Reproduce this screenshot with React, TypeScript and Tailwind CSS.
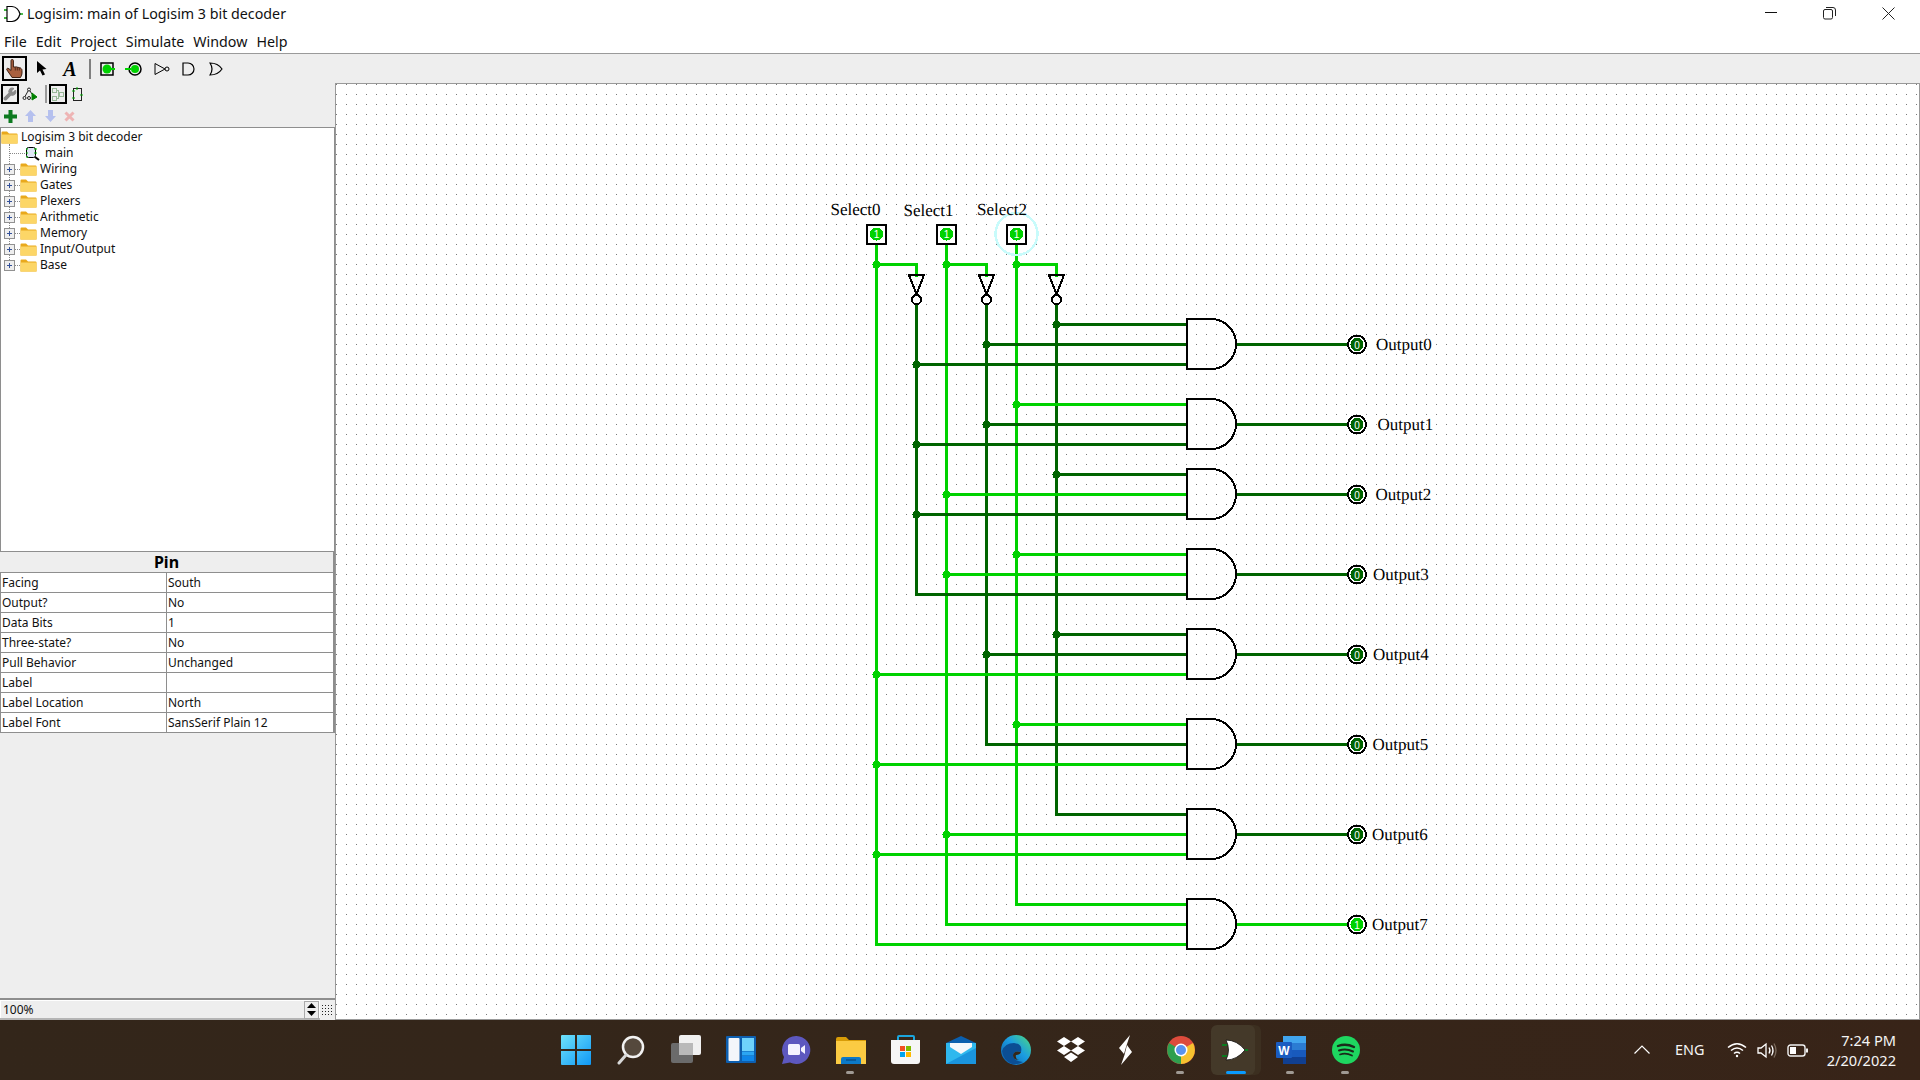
import React from "react";
import { Wrench } from "lucide-react";

const L = "#00d200";
const D = "#006400";

type Seg = [number, number, number, number, string];
const segs: Seg[] = [
  [876, 244, 876, 944, L],
  [946, 244, 946, 924, L],
  [1016, 244, 1016, 904, L],
  [916, 305, 916, 594, D],
  [986, 305, 986, 744, D],
  [1056, 305, 1056, 814, D],
  [876, 264, 916, 264, L],
  [916, 264, 916, 275, L],
  [946, 264, 986, 264, L],
  [986, 264, 986, 275, L],
  [1016, 264, 1056, 264, L],
  [1056, 264, 1056, 275, L],
];
// [column x, y, colour, junction?]
const inputs: [number, number, string, boolean][] = [
  [1056, 324, D, true], [986, 344, D, true], [916, 364, D, true],
  [1016, 404, L, true], [986, 424, D, true], [916, 444, D, true],
  [1056, 474, D, true], [946, 494, L, true], [916, 514, D, true],
  [1016, 554, L, true], [946, 574, L, true], [916, 594, D, false],
  [1056, 634, D, true], [986, 654, D, true], [876, 674, L, true],
  [1016, 724, L, true], [986, 744, D, false], [876, 764, L, true],
  [1056, 814, D, false], [946, 834, L, true], [876, 854, L, true],
  [1016, 904, L, false], [946, 924, L, false], [876, 944, L, false],
];
const outs: [number, number, number][] = [
  [344, 1376, 0], [424, 1377.5, 0], [494, 1375.5, 0], [574, 1373, 0],
  [654, 1373, 0], [744, 1372.5, 0], [834, 1372, 0], [924, 1372, 1],
];

function Circuit() {
  return (
    <svg width={1583} height={935} viewBox="336 84 1583 935" className="block" shapeRendering="crispEdges">
      <defs>
        <pattern id="dots" patternUnits="userSpaceOnUse" x="6" y="4" width="10" height="10">
          <rect x="0" y="0" width="1" height="1" fill="#7a7a7a" />
        </pattern>
      </defs>
      <rect x="336" y="84" width="1583" height="935" fill="url(#dots)" />
      {segs.map(([a, b, c, d, col], i) => (
        <line key={i} x1={a + 0.5} y1={b + 0.5} x2={c + 0.5} y2={d + 0.5} stroke={col} strokeWidth={3} strokeLinecap="square" />
      ))}
      {[876, 946, 1016].map((x) => (
        <circle key={x} cx={x + 0.5} cy={264.5} r={4} fill={L} />
      ))}
      {inputs.map(([x, y, col, j], i) => (
        <g key={i}>
          <line x1={x + 0.5} y1={y + 0.5} x2={1187} y2={y + 0.5} stroke={col} strokeWidth={3} />
          {j && <circle cx={x + 0.5} cy={y + 0.5} r={4} fill={col} />}
        </g>
      ))}
      {[916, 986, 1056].map((x) => (
        <g key={x} fill="none" stroke="#000" strokeWidth={2}>
          <path d={`M${x - 7} 275 H${x + 8} L${x + 0.5} 294 Z`} />
          <circle cx={x + 0.5} cy={299.5} r={4.5} fill="#fff" />
        </g>
      ))}
      {[876, 946, 1016].map((x) => (
        <g key={x}>
          <rect x={x - 9} y={225} width={19} height={19} fill="#fff" stroke="#000" strokeWidth={2} />
          <circle cx={x + 0.5} cy={234} r={6.5} fill={L} />
          <text x={x + 0.5} y={238} textAnchor="middle" fontSize={10} fill="#fff" fontFamily="'Liberation Sans', sans-serif">1</text>
        </g>
      ))}
      <circle cx={1016.5} cy={234} r={21} fill="none" stroke="#c8fbfb" strokeWidth={2.5} />
      {outs.map(([y, , v]) => {
        const col = v ? L : D;
        return (
          <g key={y}>
            <line x1={1236} y1={y + 0.5} x2={1348} y2={y + 0.5} stroke={col} strokeWidth={3} />
            <path d={`M1187 ${y - 25} H1211 A25 25 0 0 1 1211 ${y + 25} H1187 Z`} fill="none" stroke="#000" strokeWidth={2} />
            <circle cx={1357} cy={y + 0.5} r={9} fill="#fff" stroke="#000" strokeWidth={2} />
            <circle cx={1357} cy={y + 0.5} r={6.5} fill={col} />
            <text x={1357} y={y + 4.5} textAnchor="middle" fontSize={10} fill="#fff" fontFamily="'Liberation Sans', sans-serif">{v}</text>
          </g>
        );
      })}
      <g fontFamily="'Liberation Serif', serif" fontSize={17} fill="#000" textRendering="geometricPrecision">
        <text x={830.5} y={215}>Select0</text>
        <text x={903.5} y={216}>Select1</text>
        <text x={977} y={215}>Select2</text>
        {outs.map(([y, x], i) => (
          <text key={i} x={x} y={y + (i === 1 ? 6 : 5.5)}>{`Output${i}`}</text>
        ))}
      </g>
    </svg>
  );
}

function Folder({ className = "" }: { className?: string }) {
  return (
    <svg width={17} height={13} viewBox="0 0 17 13" className={className}>
      <path d="M0.5 1.5 Q0.5 0.5 1.5 0.5 H6 L8 2.5 H15.5 Q16.5 2.5 16.5 3.5 V12.5 H0.5 Z" fill="#e9a91c" />
      <rect x="0.5" y="3.5" width="16" height="9" fill="#fcd667" />
    </svg>
  );
}

function Expander() {
  return (
    <svg width={11} height={11} viewBox="0 0 11 11" className="shrink-0">
      <rect x="0.5" y="0.5" width="10" height="10" fill="#eeeeee" stroke="#919191" />
      <path d="M3 5.5 H8 M5.5 3 V8" stroke="#34529b" strokeWidth="1" shapeRendering="crispEdges" />
    </svg>
  );
}

const libs = ["Wiring", "Gates", "Plexers", "Arithmetic", "Memory", "Input/Output", "Base"];
const attrs: [string, string][] = [
  ["Facing", "South"],
  ["Output?", "No"],
  ["Data Bits", "1"],
  ["Three-state?", "No"],
  ["Pull Behavior", "Unchanged"],
  ["Label", ""],
  ["Label Location", "North"],
  ["Label Font", "SansSerif Plain 12"],
];

function Tree() {
  return (
    <div className="h-[425px] relative bg-white border border-[#8e8e8e] text-[12px] leading-4 text-[#111]">
      <div className="absolute left-[8px] top-[16px] h-[120px] border-l border-dotted border-[#888]" />
      <div className="flex items-center h-4 mt-[1px]">
        <Folder />
        <span className="ml-[3px]">Logisim 3 bit decoder</span>
      </div>
      <div className="flex items-center h-4 relative">
        <div className="w-[15px] ml-[9px] border-t border-dotted border-[#888]" />
        <svg width={16} height={15} viewBox="0 0 16 15">
          <rect x="1.5" y="1.5" width="9" height="10" rx="2" fill="#dfe6f5" stroke="#000" />
          <path d="M1 3h2M1 7h2M1 11h2M9 3h3M9 7h3" stroke="#00c000" />
          <path d="M10 11l4 3" stroke="#000" strokeWidth="2" />
        </svg>
        <span className="ml-[4px]">main</span>
      </div>
      {libs.map((n) => (
        <div key={n} className="flex items-center h-4 relative pl-[3px]">
          <Expander />
          <div className="w-[5px] border-t border-dotted border-[#888]" />
          <Folder />
          <span className="ml-[3px]">{n}</span>
        </div>
      ))}
    </div>
  );
}

function AttrTable() {
  return (
    <div className="w-[335px] border-r-2 border-[#8e8e8e] text-[12px] text-[#111]">
      <div className="h-5 flex items-center justify-center text-[16px] font-bold text-black">Pin</div>
      <div className="border-t border-l border-[#8e8e8e]">
        {attrs.map(([k, v]) => (
          <div key={k} className="grid grid-cols-[166px_1fr] h-5 bg-white border-b border-[#8e8e8e] leading-[19px]">
            <div className="pl-[1px] border-r border-[#8e8e8e]">{k}</div>
            <div className="pl-[1px]">{v}</div>
          </div>
        ))}
      </div>
    </div>
  );
}

function ZoomRow() {
  return (
    <div className="h-[22px] border-t-2 border-[#8e8e8e] flex text-[12px] text-[#111] bg-[#eeeeee]">
      <div className="w-[320px] h-[20px] bg-white pt-[1px] border-b-2 border-[#b5b5b5] pr-[1px]">
        <div className="h-[17px] ml-[1px] bg-[#eeeeee] flex items-center justify-between pl-[2px]">
          <span>100%</span>
          <div className="w-[15px] h-[18px] border border-[#aaa] flex flex-col items-center justify-around">
            <svg width={9} height={5} viewBox="0 0 9 5"><path d="M0 5 L4.5 0 L9 5 Z" fill="#000" /></svg>
            <svg width={9} height={5} viewBox="0 0 9 5"><path d="M0 0 L4.5 5 L9 0 Z" fill="#000" /></svg>
          </div>
        </div>
      </div>
      <svg width={12} height={11} viewBox="0 0 12 11" className="ml-[2px] mt-[5px]" shapeRendering="crispEdges">
        {[0, 1, 2, 3].map((r) =>
          [0, 1, 2, 3].map((c) => <rect key={`${r}${c}`} x={c * 3} y={r * 3} width={1} height={1} fill="#222" />)
        )}
      </svg>
    </div>
  );
}

function Slot({ w = "w-[27px]", children }: { w?: string; children: React.ReactNode }) {
  return <div className={`${w} h-full flex items-center justify-center`}>{children}</div>;
}

function MainToolbar() {
  const s = { fill: "none", stroke: "#000", strokeWidth: 1.5 };
  return (
    <div className="h-[29px] bg-[#eeeeee] flex items-center">
      <Slot w="w-[28px]">
        <div className="w-[25px] h-[25px] border-2 border-black flex items-center justify-center">
          <svg width={17} height={19} viewBox="0 0 17 19">
            <path
              d="M5 1.5 Q5 0.5 6.2 0.5 Q7.4 0.5 7.4 1.5 V8 H9.2 Q10.4 7.5 11 8.3 Q12.2 7.8 13 8.8 Q14.4 8.4 15 9.4 Q16 10 16 11.5 V14 Q16 16 14.5 18.5 H6 Q4.5 16 3 14 L0.8 10.8 Q0.5 9.5 1.6 9.3 Q2.8 9.2 5 11.5 Z"
              fill="#a9603f"
              stroke="#3d2013"
              strokeWidth="1"
            />
            <path d="M9.3 8.3 V11.5 M11.3 8.5 V11.5 M13.3 9 V11.5" stroke="#3d2013" strokeWidth="0.8" />
          </svg>
        </div>
      </Slot>
      <Slot w="w-[28px]">
        <svg width={12} height={17} viewBox="0 0 12 17"><path d="M1 1 L1 13 L4 10.5 L6.5 15.5 L9 14.5 L6.5 9.5 L10.5 9 Z" fill="#000" /></svg>
      </Slot>
      <Slot w="w-[28px]">
        <span className="text-[20px] font-bold italic leading-none text-black" style={{ fontFamily: "'Liberation Serif', serif" }}>A</span>
      </Slot>
      <div className="w-[2px] h-[20px] ml-[5px] mr-[3px] bg-[#808080]" />
      <Slot>
        <svg width={16} height={16} viewBox="0 0 16 16">
          <rect x="1" y="2" width="12" height="12" {...s} />
          <circle cx="7" cy="8" r="4.5" fill={L} />
          <path d="M11 8h4" stroke={L} strokeWidth="2" />
        </svg>
      </Slot>
      <Slot>
        <svg width={20} height={16} viewBox="0 0 20 16" className="mr-[1px]">
          <circle cx="11" cy="8" r="6" {...s} />
          <circle cx="11" cy="8" r="4" fill={L} />
          <path d="M1 8h6" stroke={L} strokeWidth="2" />
        </svg>
      </Slot>
      <Slot>
        <svg width={16} height={14} viewBox="0 0 16 14" className="ml-[1px]">
          <path d="M1 1.5 V12.5 L11 7 Z" fill="none" stroke="#000" />
          <circle cx="13" cy="7" r="2" fill="none" stroke="#000" />
        </svg>
      </Slot>
      <Slot>
        <svg width={14} height={14} viewBox="0 0 14 14">
          <path d="M1 1 H6 A6 6 0 0 1 6 13 H1 Z" {...s} strokeWidth={1.2} />
        </svg>
      </Slot>
      <Slot>
        <svg width={14} height={14} viewBox="0 0 14 14">
          <path d="M1 1 Q9 1 13 7 Q9 13 1 13 Q5 7 1 1 Z" {...s} strokeWidth={1.2} />
        </svg>
      </Slot>
    </div>
  );
}

function ExplorerToolbars() {
  return (
    <>
      <div className="h-[22px] flex items-center pl-[1px]">
        <div className="w-[18px] h-[20px] border-2 border-black flex items-center justify-center">
          <Wrench size={14} fill="#8a8a8a" stroke="#8a8a8a" />
        </div>
        <Slot w="w-[22px]">
          <svg width={16} height={14} viewBox="0 0 16 14" fill="none" stroke="#222">
            <circle cx="2.5" cy="11" r="1.5" />
            <circle cx="7" cy="2.5" r="1.5" />
            <circle cx="7" cy="11" r="1.5" />
            <path d="M3 9.5 L6 4 M8 4 L10 7" />
            <path d="M10 6 L15 10 L10 13 Z" fill="#008000" stroke="#008000" />
          </svg>
        </Slot>
        <div className="w-[2px] h-[18px] ml-[4px] mr-[2px] bg-[#9a9a9a]" />
        <div className="w-[18px] h-[20px] border-2 border-black flex items-center justify-center">
          <svg width={13} height={14} viewBox="0 0 13 14" fill="none" stroke="#98b898" shapeRendering="crispEdges">
            <rect x="0.5" y="1.5" width="4" height="4" />
            <rect x="0.5" y="9.5" width="4" height="4" />
            <rect x="7.5" y="5.5" width="4" height="4" />
            <path d="M4.5 3.5 H6 V7.5 H7.5 M4.5 11.5 H6 V7.5" />
          </svg>
        </div>
        <Slot w="w-[20px]">
          <svg width={13} height={15} viewBox="0 0 13 15" fill="none">
            <rect x="2.5" y="1.5" width="8" height="12" stroke="#222" />
            <path d="M1 4h3M1 11h3M9 8h3M6 0v3" stroke="#00b000" />
          </svg>
        </Slot>
      </div>
      <div className="h-[22px] flex items-center">
        <Slot w="w-[20px]">
          <svg width={13} height={13} viewBox="0 0 13 13"><path d="M4.5 0h4v4.5H13v4H8.5V13h-4V8.5H0v-4h4.5z" fill="#0d7a20" /></svg>
        </Slot>
        <Slot w="w-[20px]">
          <svg width={11} height={12} viewBox="0 0 11 12"><path d="M5.5 0 L11 6 H8 V12 H3 V6 H0 Z" fill="#b5c0ee" /></svg>
        </Slot>
        <Slot w="w-[20px]">
          <svg width={11} height={12} viewBox="0 0 11 12"><path d="M5.5 12 L11 6 H8 V0 H3 V6 H0 Z" fill="#b5c0ee" /></svg>
        </Slot>
        <Slot w="w-[18px]">
          <svg width={11} height={11} viewBox="0 0 11 11"><path d="M1.5 1.5 L9.5 9.5 M9.5 1.5 L1.5 9.5" stroke="#eeb4b4" strokeWidth="3" /></svg>
        </Slot>
      </div>
    </>
  );
}

function TaskIcon({ i, dot, active }: { i: React.ReactNode; dot?: boolean; active?: boolean }) {
  return (
    <div className="w-[55px] h-full relative flex items-center justify-center">
      {active && (
        <>
          <div className="absolute left-[9px] top-[5px] w-[44px] h-[50px] rounded-md bg-[#3c2f20]" />
          <div className="absolute left-[3px] top-[5px] w-[44px] h-[50px] rounded-md bg-[#443929]" />
          <div className="absolute left-[18px] top-[51px] w-[20px] h-[3px] rounded-sm bg-[#0a9bff]" />
        </>
      )}
      <div className="relative">{i}</div>
      {dot && <div className="absolute left-[23px] top-[51px] w-[8px] h-[3px] rounded-sm bg-[#a09a94]" />}
    </div>
  );
}

const icons: { i: React.ReactNode; dot?: boolean; active?: boolean }[] = [
  {
    i: (
      <svg width={30} height={30} viewBox="0 0 30 30">
        <defs>
          <linearGradient id="w1" x1="0" y1="0" x2="1" y2="1">
            <stop offset="0" stopColor="#6fe3fb" />
            <stop offset="1" stopColor="#1098f5" />
          </linearGradient>
        </defs>
        <path d="M0 1 Q0 0 1 0 H14 V14 H0 Z M16 0 H29 Q30 0 30 1 V14 H16 Z M0 16 H14 V30 H1 Q0 30 0 29 Z M16 16 H30 V29 Q30 30 29 30 H16 Z" fill="url(#w1)" />
      </svg>
    ),
  },
  {
    i: (
      <svg width={28} height={30} viewBox="0 0 28 30" fill="none">
        <circle cx="16" cy="12" r="10" fill="#55493d" stroke="#f2f2f2" strokeWidth="2.5" />
        <path d="M9 20 L2 28" stroke="#d8d8d8" strokeWidth="3" strokeLinecap="round" />
      </svg>
    ),
  },
  {
    i: (
      <svg width={30} height={30} viewBox="0 0 30 30">
        <rect x="0" y="8" width="22" height="20" rx="2" fill="#6b6b6b" />
        <rect x="8" y="0" width="22" height="20" rx="2" fill="#f0f0f0" />
        <rect x="8" y="8" width="14" height="12" fill="#b9b9b9" />
      </svg>
    ),
  },
  {
    i: (
      <svg width={30} height={28} viewBox="0 0 30 28">
        <rect width="30" height="27" rx="1" fill="#0d5fb0" />
        <rect x="2.5" y="2" width="11" height="23" rx="1" fill="#f4f6fa" />
        <rect x="16" y="2" width="12" height="13" fill="#6fd2fb" />
        <rect x="16" y="15.5" width="12" height="4" fill="#2ba6f3" />
        <rect x="16" y="20" width="12" height="5" fill="#0f86e8" />
      </svg>
    ),
  },
  {
    i: (
      <svg width={30} height={30} viewBox="0 0 30 30">
        <path d="M15.5 1 A14 14 0 1 1 9 27.5 L1 29 L3 22 A14 14 0 0 1 15.5 1 Z" fill="#5d58bf" />
        <rect x="7" y="9" width="12" height="11" rx="1.5" fill="#f4f3ff" />
        <path d="M20 13 L24 10 V19 L20 16 Z" fill="#f4f3ff" />
      </svg>
    ),
  },
  {
    dot: true,
    i: (
      <svg width={30} height={27} viewBox="0 0 30 27">
        <path d="M0 2 Q0 0 2 0 H10 L13 3 H30 V5 H0 Z" fill="#d89c07" />
        <rect y="4" width="30" height="23" fill="#fbcb43" />
        <path d="M5 27 V22 Q5 20 7 20 H23 Q25 20 25 22 V27 Z" fill="#0c79c7" />
        <path d="M10 23 H20" stroke="#063f70" strokeWidth="1" />
      </svg>
    ),
  },
  {
    i: (
      <svg width={30} height={30} viewBox="0 0 30 30">
        <path d="M7 6 V2 Q7 1 8 1 H22 Q23 1 23 2 V6" fill="none" stroke="#1ba6dd" strokeWidth="2" />
        <path d="M0 5 H29 V26 Q29 29 26 29 H3 Q0 29 0 26 Z" fill="#f6f6f6" />
        <rect x="9" y="11" width="5" height="5" fill="#f25022" />
        <rect x="15" y="11" width="5" height="5" fill="#7fba00" />
        <rect x="9" y="17" width="5" height="5" fill="#00a4ef" />
        <rect x="15" y="17" width="5" height="5" fill="#ffb900" />
      </svg>
    ),
  },
  {
    i: (
      <svg width={30} height={28} viewBox="0 0 30 28">
        <path d="M0 7 L15 0 L30 7 V8 H0 Z" fill="#0a5fae" />
        <path d="M0 7 H30 V28 H0 Z" fill="#2fb8ee" />
        <path d="M4 7 H26 V11 L15 18 L4 11 Z" fill="#f3f7fb" />
        <path d="M0 28 L30 12 V28 Z" fill="#1a95de" />
      </svg>
    ),
  },
  {
    i: (
      <svg width={30} height={30} viewBox="0 0 30 30">
        <defs>
          <linearGradient id="e1" x1="0" y1="1" x2="1" y2="0">
            <stop offset="0" stopColor="#0c59a4" />
            <stop offset="0.55" stopColor="#1b9de2" />
            <stop offset="1" stopColor="#4fdc7a" />
          </linearGradient>
        </defs>
        <circle cx="15" cy="15" r="15" fill="url(#e1)" />
        <path d="M1 16 Q4 8 13 8 Q22 9 20 17 Q13 15 12 20 Q12 26 22 27 Q16 30 11 29 Q2 25 1 16 Z" fill="#0b4e94" />
        <path d="M12 20 Q13 15 20 17 Q19 20 15 20 Q14 24 18 25 Q12 25 12 20 Z" fill="#35271a" />
      </svg>
    ),
  },
  {
    i: (
      <svg width={30} height={26} viewBox="0 0 30 26">
        <path d="M8 0 L15 4.5 L8 9 L1 4.5 Z M22 0 L29 4.5 L22 9 L15 4.5 Z M8 9 L15 13.5 L8 18 L1 13.5 Z M22 9 L29 13.5 L22 18 L15 13.5 Z M15 15.5 L22 20 L15 25 L8 20 Z" fill="#fff" />
      </svg>
    ),
  },
  {
    i: (
      <svg width={14} height={30} viewBox="0 0 14 30">
        <path d="M11 0 L0 13 L5 19 L7 12 Z" fill="#fff" />
        <path d="M8 10 L13 17 L2 30 L5.5 20 Z" fill="#fff" />
      </svg>
    ),
  },
  {
    dot: true,
    i: (
      <svg width={28} height={28} viewBox="0 0 28 28">
        <circle cx="14" cy="14" r="14" fill="#dd4b3c" />
        <path d="M14 14 L26 7 A14 14 0 0 1 14 28 Z" fill="#f6c22f" />
        <path d="M14 14 L14 28 A14 14 0 0 1 2 7 Z" fill="#2f9f4f" />
        <circle cx="14" cy="14" r="6.5" fill="#fff" />
        <circle cx="14" cy="14" r="5" fill="#5a93ee" />
      </svg>
    ),
  },
  {
    active: true,
    i: (
      <svg width={26} height={22} viewBox="0 0 26 22" className="mr-[1px]">
        <path d="M0 6 H5 M0 17 H5" stroke="#0a7a20" strokeWidth="2" />
        <path d="M22 11 H26" stroke="#0a7a20" strokeWidth="2" />
        <path d="M4 1 Q15 1 23 11 Q15 21 4 21 Q9 11 4 1 Z" fill="#fff" stroke="#111" strokeWidth="0.8" />
      </svg>
    ),
  },
  {
    dot: true,
    i: (
      <svg width={30} height={28} viewBox="0 0 30 28">
        <rect x="7" y="0" width="23" height="7" fill="#41a5ee" />
        <rect x="7" y="7" width="23" height="7" fill="#2b7cd3" />
        <rect x="7" y="14" width="23" height="7" fill="#185abd" />
        <rect x="7" y="21" width="23" height="7" fill="#103f91" />
        <rect x="0" y="6" width="16" height="16" rx="1" fill="#1a5cc0" />
        <text x="8" y="19" textAnchor="middle" fontSize="12" fontWeight="700" fill="#fff" fontFamily="'Liberation Sans', sans-serif">W</text>
      </svg>
    ),
  },
  {
    dot: true,
    i: (
      <svg width={28} height={28} viewBox="0 0 28 28" fill="none">
        <circle cx="14" cy="14" r="14" fill="#1ed760" />
        <path d="M6 10 Q14 7 22 11" stroke="#1a2a1a" strokeWidth="2.4" strokeLinecap="round" />
        <path d="M7 14.5 Q14 12 21 15.5" stroke="#1a2a1a" strokeWidth="2" strokeLinecap="round" />
        <path d="M8 18.5 Q14 16.5 20 19.5" stroke="#1a2a1a" strokeWidth="1.7" strokeLinecap="round" />
      </svg>
    ),
  },
];

function Taskbar() {
  return (
    <div className="h-[60px] flex bg-gradient-to-r from-[#33261a] via-[#35261a] to-[#382418] text-white">
      <div className="ml-[548px] flex h-full">
        {icons.map((ic, n) => (
          <TaskIcon key={n} {...ic} />
        ))}
      </div>
      <div className="ml-[261px] flex items-center h-full">
        <svg width={16} height={9} viewBox="0 0 16 9" fill="none" className="mb-[1px]">
          <path d="M0.5 8.5 L8 1 L15.5 8.5" stroke="#ffffff" strokeWidth="1.2" />
        </svg>
        <span className="ml-[25px] text-[14.4px] w-[31px] text-[#f5f5f5]">ENG</span>
        <svg width={20} height={16} viewBox="0 0 20 16" fill="none" stroke="#fff" strokeWidth="1.6" className="ml-[21px]">
          <path d="M1 5.5 Q10 -2 19 5.5" />
          <path d="M4 8.5 Q10 3.5 16 8.5" />
          <path d="M7 11.5 Q10 9 13 11.5" />
          <circle cx="10" cy="14" r="1.2" fill="#fff" stroke="none" />
        </svg>
        <svg width={20} height={17} viewBox="0 0 20 17" fill="none" stroke="#fff" strokeWidth="1.3" className="ml-[10px]">
          <path d="M1 6 H4 L9 2 V15 L4 11 H1 Z" />
          <path d="M12 5.5 Q14 8.5 12 11.5 M14.5 3.5 Q17.5 8.5 14.5 13.5" />
          <path d="M17 1.5 Q21 8.5 17 15.5" stroke="#7a6a5c" />
        </svg>
        <svg width={21} height={13} viewBox="0 0 21 13" fill="none" className="ml-[10px]">
          <rect x="1" y="1" width="17" height="11" rx="2.5" stroke="#f2f2f2" strokeWidth="1.4" />
          <rect x="3" y="3" width="6" height="7" fill="#fff" />
          <rect x="19" y="4.5" width="2" height="4" fill="#f2f2f2" />
        </svg>
        <div className="ml-[18px] w-[70px] text-right text-[14.6px] leading-[20px] text-[#f5f5f5] whitespace-nowrap">
          <div>7:24 PM</div>
          <div>2/20/2022</div>
        </div>
      </div>
    </div>
  );
}

export default function App() {
  return (
    <div className="w-[1920px] h-[1080px] overflow-hidden bg-white flex flex-col" style={{ fontFamily: "'Noto Sans', sans-serif" }}>
      <div className="h-[30px] flex items-center relative">
        <svg width={20} height={18} viewBox="0 0 20 18" className="ml-[3px] mb-[2px]" fill="none">
          <path d="M1 5h3M1 13h3" stroke="#00a000" strokeWidth="1.4" />
          <path d="M17 9h3" stroke="#00a000" strokeWidth="1.4" />
          <path d="M4 1.5 H9 Q15 2 17 9 Q15 16 9 16.5 H4 Z" stroke="#000" strokeWidth="1.2" />
        </svg>
        <span className="ml-[4px] text-[14.27px] text-[#111] mb-[2px]">Logisim: main of Logisim 3 bit decoder</span>
        <div className="ml-auto flex items-center h-full">
          <svg width={12} height={2} viewBox="0 0 12 2" className="mr-[46px] mb-[4px]"><rect width="12" height="1" fill="#111" /></svg>
          <svg width={13} height={13} viewBox="0 0 13 13" fill="none" stroke="#222" className="mr-[46px] mb-[3px]">
            <rect x="0.5" y="2.5" width="9" height="9.5" rx="1.5" />
            <path d="M3 0.5 H10 Q12.5 0.5 12.5 3 V9" />
          </svg>
          <svg width={13} height={13} viewBox="0 0 13 13" fill="none" stroke="#222" className="mr-[25px] mb-[3px]">
            <path d="M0.5 0.5 L12.5 12.5 M12.5 0.5 L0.5 12.5" />
          </svg>
        </div>
      </div>
      <div className="h-[24px] border-b border-[#9a9a9a] flex items-start pl-[4px] text-[14.25px] leading-[23px] text-[#111] gap-[9px]">
        {["File", "Edit", "Project", "Simulate", "Window", "Help"].map((m) => (
          <span key={m}>{m}</span>
        ))}
      </div>
      <MainToolbar />
      <div className="h-[937px] flex">
        <div className="w-[335px] h-full bg-[#eeeeee] flex flex-col">
          <ExplorerToolbars />
          <Tree />
          <AttrTable />
          <div className="flex-1" />
          <ZoomRow />
        </div>
        <div className="flex-1 border border-[#999999] bg-white">
          <Circuit />
        </div>
      </div>
      <Taskbar />
    </div>
  );
}
